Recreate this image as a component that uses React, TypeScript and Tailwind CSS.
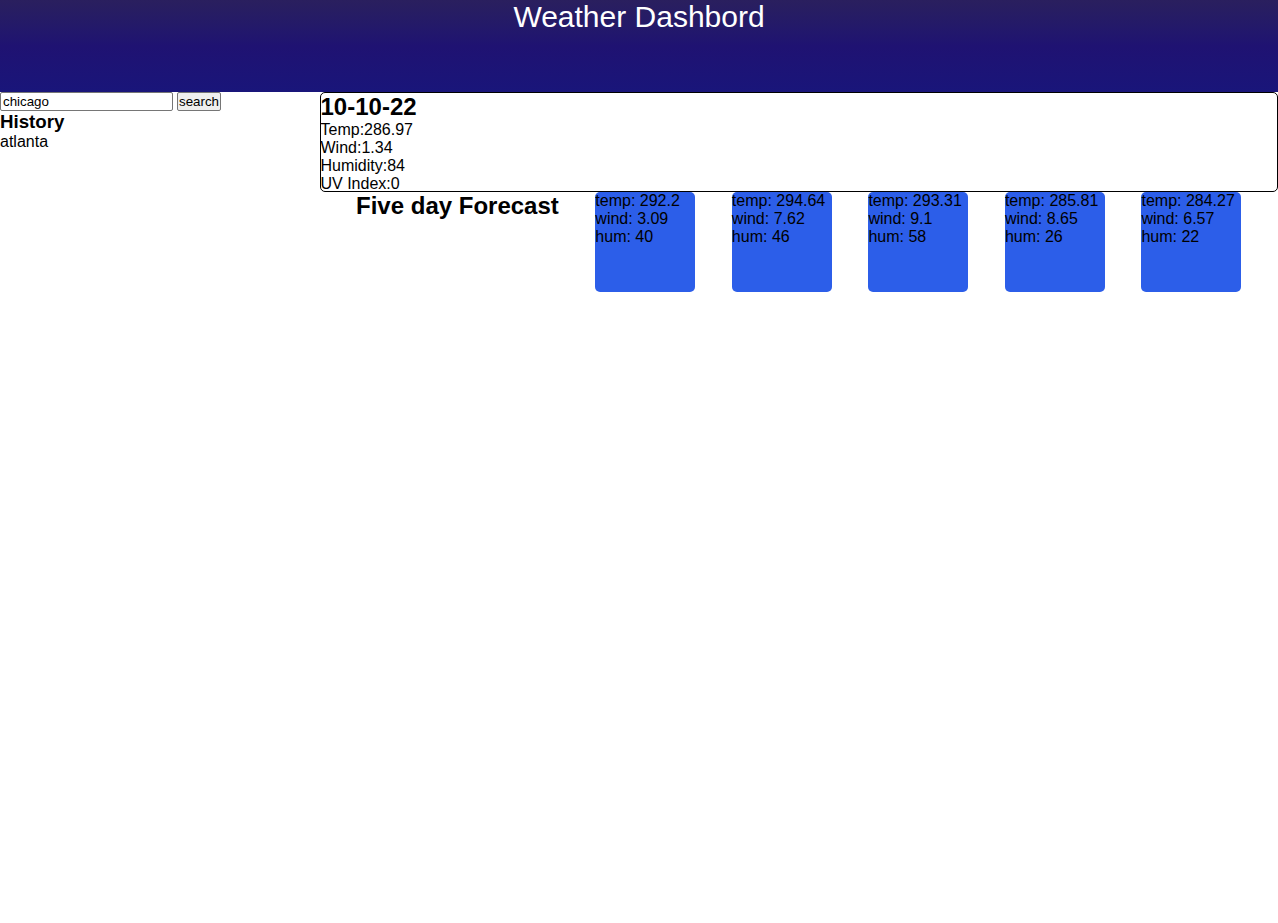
import React from "react";

const forecast = [
  { temp: "292.2", wind: "3.09", hum: "40" },
  { temp: "294.64", wind: "7.62", hum: "46" },
  { temp: "293.31", wind: "9.1", hum: "58" },
  { temp: "285.81", wind: "8.65", hum: "26" },
  { temp: "284.27", wind: "6.57", hum: "22" },
];

export default function App() {
  return (
    <div className="min-h-[923px] bg-white text-black font-['Liberation_Sans',Arial,sans-serif] text-[16px] leading-[1.149]">
      <header className="h-[92px] bg-gradient-to-b from-[#2a1f5e] via-[#1f1272] to-[#19157a] text-center text-white">
        <h1 className="m-0 text-[30px] leading-[1.149] font-normal">Weather Dashbord</h1>
      </header>
      <div className="flex">
        <aside className="w-1/4">
          <form className="flex items-start gap-[4px]" onSubmit={(e) => e.preventDefault()}>
            <input
              defaultValue="chicago"
              className="h-[19px] w-[173px] border border-[#767676] rounded-[2px] px-[2px] text-[13.33px] leading-[15px] font-['Liberation_Sans',Arial,sans-serif] bg-white outline-none"
            />
            <button
              type="submit"
              className="h-[19px] w-[44px] px-0 border border-[#767676] rounded-[2px] bg-[#efefef] text-[13.33px] leading-[15px] font-['Liberation_Sans',Arial,sans-serif]"
            >
              search
            </button>
          </form>
          <h3 className="m-0 text-[18.72px] font-bold leading-[1.149]">History</h3>
          <div>atlanta</div>
        </aside>
        <main className="w-3/4">
          <section className="h-[100px] border border-black rounded-[5px]">
            <h2 className="m-0 text-[24px] font-bold leading-[1.149]">10-10-22</h2>
            <div className="leading-[18px]">Temp:286.97</div>
            <div className="leading-[18px]">Wind:1.34</div>
            <div className="leading-[18px]">Humidity:84</div>
            <div className="leading-[18px]">UV Index:0</div>
          </section>
          <div className="flex justify-evenly items-start">
            <h2 className="m-0 text-[24px] font-bold leading-[1.149]">Five day Forecast</h2>
            {forecast.map((f, i) => (
              <div key={i} className="w-[100px] h-[100px] rounded-[5px] bg-[#2c5ee9] leading-[18px]">
                <div>temp: {f.temp}</div>
                <div>wind: {f.wind}</div>
                <div>hum: {f.hum}</div>
              </div>
            ))}
          </div>
        </main>
      </div>
    </div>
  );
}
